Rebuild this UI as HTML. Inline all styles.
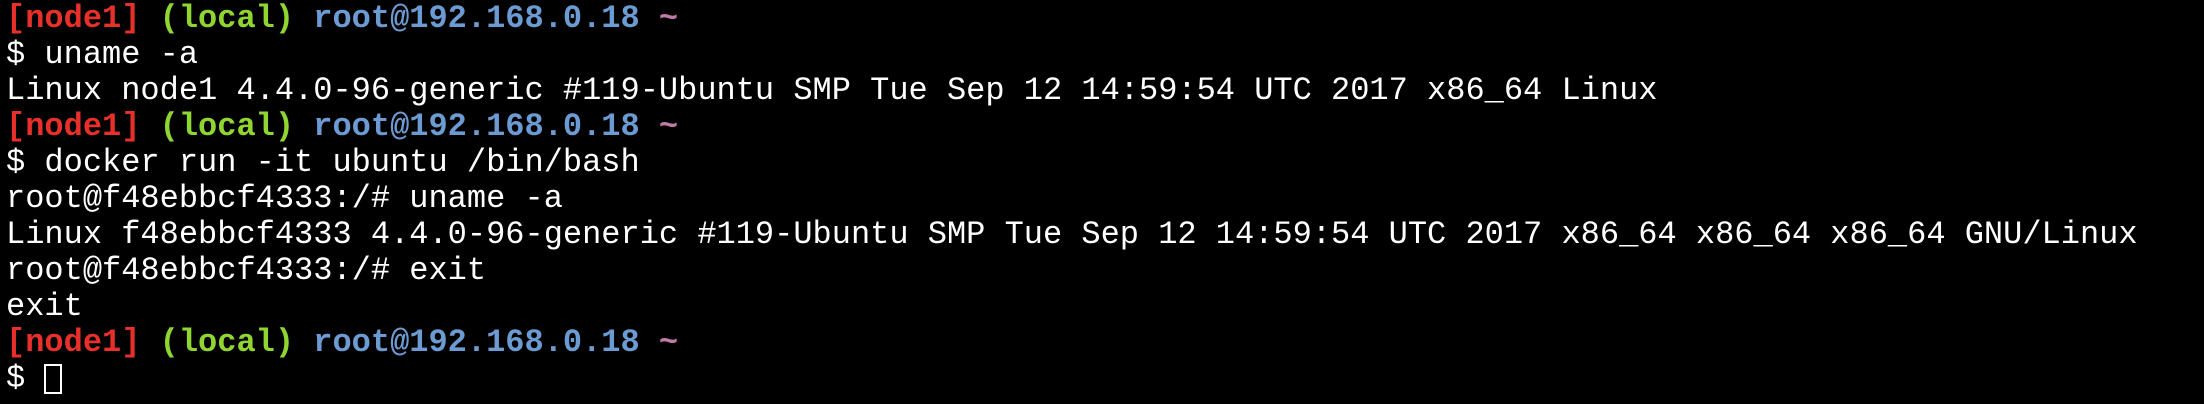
<!DOCTYPE html>
<html><head><meta charset="utf-8"><style>
html,body{margin:0;padding:0;background:#000;width:2204px;height:404px;overflow:hidden}
pre{margin:0;padding:0 0 0 6px;font-family:"Liberation Mono",monospace;font-size:32px;line-height:36px;color:#fff;position:relative;top:1px}
.r{color:#e8302a;font-weight:bold}.g{color:#8fd630;font-weight:bold}.b{color:#6b9bd2;font-weight:bold}.t{color:#c07aa8;font-weight:bold}
.c{display:inline-block;width:18px;height:30px;border:2px solid #fff;box-sizing:border-box;vertical-align:-7px}
</style></head><body><pre><span class="r">[node1]</span> <span class="g">(local)</span> <span class="b">root@192.168.0.18</span> <span class="t">~</span>
$ uname -a
Linux node1 4.4.0-96-generic #119-Ubuntu SMP Tue Sep 12 14:59:54 UTC 2017 x86_64 Linux
<span class="r">[node1]</span> <span class="g">(local)</span> <span class="b">root@192.168.0.18</span> <span class="t">~</span>
$ docker run -it ubuntu /bin/bash
root@f48ebbcf4333:/# uname -a
Linux f48ebbcf4333 4.4.0-96-generic #119-Ubuntu SMP Tue Sep 12 14:59:54 UTC 2017 x86_64 x86_64 x86_64 GNU/Linux
root@f48ebbcf4333:/# exit
exit
<span class="r">[node1]</span> <span class="g">(local)</span> <span class="b">root@192.168.0.18</span> <span class="t">~</span>
$ <span class="c"></span></pre></body></html>
